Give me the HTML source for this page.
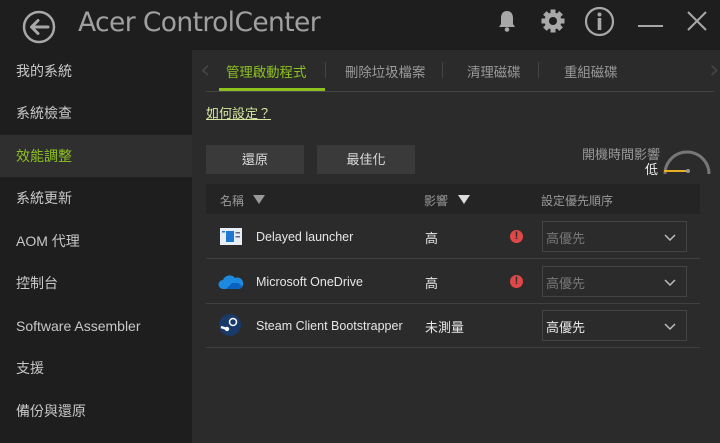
<!DOCTYPE html>
<html><head><meta charset="utf-8"><style>
*{margin:0;padding:0;box-sizing:border-box}
body{width:720px;height:443px;background:#1e1e1e;font-family:"Liberation Sans","Noto Sans CJK TC",sans-serif;color:#ccc;position:relative;overflow:hidden}
.a{position:absolute}
.title{left:78px;top:7px;font-size:26.5px;color:#a0a0a0;font-family:"DejaVu Sans","Liberation Sans",sans-serif;letter-spacing:-0.6px}
.side div{position:absolute;left:0;width:192px;height:42px;line-height:42px;padding-left:16px;font-size:14px;color:#c8c8c8}
.panel{left:192px;top:50px;width:528px;height:393px;background:#2b2b2b}
.tab{top:61px;font-size:13.4px;color:#9a9a9a}
.arr{top:55px;font-size:26px;color:#444;font-family:"DejaVu Sans",sans-serif}
.btn{top:145px;height:29px;background:#3a3a3a;color:#ddd;font-size:13px;text-align:center;line-height:29px}
.row{left:206px;width:494px;height:44px;border-bottom:1px solid #404040}
.row .n{position:absolute;left:50px;top:15px;font-size:12.5px;color:#e6e6e6}
.row .i{position:absolute;left:219px;top:13px;font-size:13px;color:#e6e6e6}
.sel{position:absolute;left:336px;top:6px;width:145px;height:31px;border:1px solid #444;font-size:13px;color:#777;padding:6px 3px}
.sel svg{position:absolute;right:10px;top:12px}
.warn{position:absolute;left:304px;top:15px;width:13px;height:13px;border-radius:50%;background:#e04848;color:#2b2b2b;font-size:11px;font-weight:bold;text-align:center;line-height:13px}
</style></head><body>
<svg class="a" style="left:22px;top:10px" width="34" height="34" viewBox="0 0 34 34"><circle cx="17" cy="17" r="15" fill="none" stroke="#a8a8a8" stroke-width="2.5"/><path d="M26 17H10M16 10.5L9.5 17 16 23.5" fill="none" stroke="#a8a8a8" stroke-width="3" stroke-linecap="round" stroke-linejoin="round"/></svg>
<div class="a title">Acer ControlCenter</div>
<svg class="a" style="left:495px;top:9px" width="24" height="24" viewBox="0 0 24 24"><path d="M12 2c-4 0-6 3-6 7v6l-2 3h16l-2-3V9c0-4-2-7-6-7z" fill="#a8a8a8"/><circle cx="12" cy="20.5" r="2.3" fill="#a8a8a8"/></svg>
<svg class="a" style="left:540px;top:8px" width="26" height="26" viewBox="0 0 26 26"><g fill="#a8a8a8"><circle cx="13" cy="13" r="8.5"/><g id="t"><rect x="10.5" y="1.5" width="5" height="5"/><rect x="10.5" y="19.5" width="5" height="5"/></g><use href="#t" transform="rotate(45 13 13)"/><use href="#t" transform="rotate(90 13 13)"/><use href="#t" transform="rotate(135 13 13)"/></g><circle cx="13" cy="13" r="4" fill="#1e1e1e"/></svg>
<svg class="a" style="left:584px;top:6px" width="31" height="31" viewBox="0 0 31 31"><circle cx="15.5" cy="15.5" r="13.5" fill="none" stroke="#a8a8a8" stroke-width="2.2"/><circle cx="15.5" cy="8.5" r="2" fill="#a8a8a8"/><rect x="13.7" y="12" width="3.6" height="12" fill="#a8a8a8"/></svg>
<div class="a" style="left:638px;top:25px;width:25px;height:2px;background:#a8a8a8"></div>
<svg class="a" style="left:686px;top:10px" width="22" height="22" viewBox="0 0 22 22"><path d="M2 2L20 20M20 2L2 20" stroke="#a8a8a8" stroke-width="2"/></svg>

<div class="side">
<div style="top:50px">我的系統</div>
<div style="top:92px">系統檢查</div>
<div style="top:135px;background:#2f2f2f;color:#8dc21f">效能調整</div>
<div style="top:177px">系統更新</div>
<div style="top:220px">AOM 代理</div>
<div style="top:262px">控制台</div>
<div style="top:305px">Software Assembler</div>
<div style="top:347px">支援</div>
<div style="top:390px">備份與還原</div>
</div>

<div class="a panel"></div>
<div class="a arr" style="left:200px">‹</div>
<div class="a tab" style="left:226px;color:#8dc21f">管理啟動程式</div>
<div class="a" style="left:325px;top:62px;width:1px;height:16px;background:#444"></div>
<div class="a tab" style="left:345px">刪除垃圾檔案</div>
<div class="a" style="left:442px;top:62px;width:1px;height:16px;background:#444"></div>
<div class="a tab" style="left:467px">清理磁碟</div>
<div class="a" style="left:538px;top:62px;width:1px;height:16px;background:#444"></div>
<div class="a tab" style="left:564px">重組磁碟</div>
<div class="a arr" style="left:709px">›</div>
<div class="a" style="left:206px;top:91px;width:508px;height:1px;background:#444"></div>
<div class="a" style="left:219px;top:88px;width:106px;height:3px;background:#8dc21f"></div>
<div class="a" style="left:206px;top:103px;font-size:13px;color:#d6e6a0;text-decoration:underline">如何設定？</div>

<div class="a btn" style="left:206px;width:98px">還原</div>
<div class="a btn" style="left:317px;width:98px">最佳化</div>
<div class="a" style="left:582px;top:144px;font-size:13px;color:#999">開機時間影響</div>
<div class="a" style="left:645px;top:159px;font-size:13px;color:#eee">低</div>
<svg class="a" style="left:660px;top:145px" width="54" height="32" viewBox="0 0 54 32"><path d="M5 29A22 22 0 0 1 49 29" fill="none" stroke="#777" stroke-width="3"/><path d="M4 26H28" stroke="#e6b020" stroke-width="2"/><circle cx="28" cy="26" r="2" fill="#999"/></svg>

<div class="a" style="left:206px;top:184px;width:494px;height:30px;background:#242424"></div>
<div class="a" style="left:220px;top:192px;font-size:12px;color:#999">名稱</div>
<svg class="a" style="left:253px;top:195px" width="12" height="9"><path d="M0 0H12L6 9z" fill="#999"/></svg>
<div class="a" style="left:424px;top:192px;font-size:12px;color:#999">影響</div>
<svg class="a" style="left:458px;top:195px" width="12" height="9"><path d="M0 0H12L6 9z" fill="#ddd"/></svg>
<div class="a" style="left:541px;top:192px;font-size:12px;color:#999">設定優先順序</div>

<div class="a row" style="top:215px">
<svg style="position:absolute;left:14px;top:13px" width="22" height="17"><rect x="0" y="0" width="22" height="17" fill="#e8eef5"/><rect x="6" y="3" width="8" height="11" fill="#1e78d0"/><rect x="2" y="3" width="3" height="1.5" fill="#1e78d0"/><rect x="15.5" y="4" width="4.5" height="1.5" fill="#668"/><rect x="15.5" y="8" width="4.5" height="1.5" fill="#668"/></svg>
<div class="n">Delayed launcher</div><div class="i">高</div><div class="warn">!</div>
<div class="sel">高優先<svg width="12" height="7"><path d="M1 1L6 6 11 1" fill="none" stroke="#bbb" stroke-width="1.5"/></svg></div></div>
<div class="a row" style="top:260px">
<svg style="position:absolute;left:12px;top:12px" width="26" height="18" viewBox="0 0 26 18"><path d="M5 17A4.5 4.5 0 0 1 5 8 7 7 0 0 1 17 6 5.5 5.5 0 0 1 21.5 17z" fill="#1c8ae0"/><path d="M8 17L14 11 20 11 24 14 22 17z" fill="#0a62c0"/></svg>
<div class="n">Microsoft OneDrive</div><div class="i">高</div><div class="warn">!</div>
<div class="sel">高優先<svg width="12" height="7"><path d="M1 1L6 6 11 1" fill="none" stroke="#bbb" stroke-width="1.5"/></svg></div></div>
<div class="a row" style="top:304px">
<svg style="position:absolute;left:13px;top:10px" width="22" height="22" viewBox="0 0 22 22"><circle cx="11" cy="11" r="11" fill="#1a3a6a"/><circle cx="14" cy="8" r="3.5" fill="none" stroke="#fff" stroke-width="1.5"/><path d="M2 13L8 15" stroke="#fff" stroke-width="2.5"/><circle cx="8" cy="15" r="2.2" fill="#fff"/></svg>
<div class="n">Steam Client Bootstrapper</div><div class="i">未測量</div>
<div class="sel" style="color:#e6e6e6">高優先<svg width="12" height="7"><path d="M1 1L6 6 11 1" fill="none" stroke="#bbb" stroke-width="1.5"/></svg></div></div>
</body></html>
